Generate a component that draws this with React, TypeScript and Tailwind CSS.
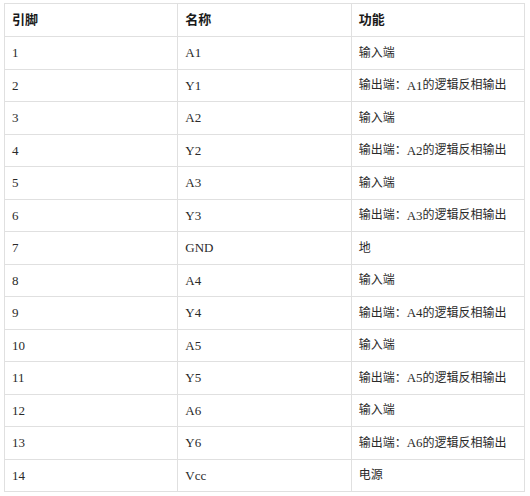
import React from "react";

const rows: [string, string, string][] = [
  ["1", "A1", "输入端"],
  ["2", "Y1", "输出端：A1的逻辑反相输出"],
  ["3", "A2", "输入端"],
  ["4", "Y2", "输出端：A2的逻辑反相输出"],
  ["5", "A3", "输入端"],
  ["6", "Y3", "输出端：A3的逻辑反相输出"],
  ["7", "GND", "地"],
  ["8", "A4", "输入端"],
  ["9", "Y4", "输出端：A4的逻辑反相输出"],
  ["10", "A5", "输入端"],
  ["11", "Y5", "输出端：A5的逻辑反相输出"],
  ["12", "A6", "输入端"],
  ["13", "Y6", "输出端：A6的逻辑反相输出"],
  ["14", "Vcc", "电源"],
];

const font = { fontFamily: '"Liberation Serif", "Noto Sans CJK SC", serif' };

// CJK runs are set a touch smaller than the latin ones, like the original page
const Mixed = ({ text }: { text: string }) => (
  <>
    {text.split(/([\u3000-\uffff]+)/).map((part, i) =>
      /[\u3000-\uffff]/.test(part) ? (
        <span key={i} className="text-[12px]">
          {part}
        </span>
      ) : (
        <span key={i}>{part}</span>
      )
    )}
  </>
);

const App = () => {
  return (
    <div className="w-[530px] h-[496px] bg-white pt-[3px] pl-[4px]" style={font}>
      <div className="w-[521px] border-l border-t border-[#e0e0e0] text-[#2a2a2a]">
        <div className="grid grid-cols-3 h-[33px] border-b border-[#e0e0e0]">
          {["引脚", "名称", "功能"].map((h) => (
            <div
              key={h}
              className="flex items-center pl-[7px] border-r border-[#e0e0e0] text-[13px] font-bold text-[#1a1a1a]"
            >
              {h}
            </div>
          ))}
        </div>
        {rows.map((r) => (
          <div key={r[0]} className="grid grid-cols-3 h-[32.5px] border-b border-[#e0e0e0]">
            {r.map((c, i) => (
              <div
                key={i}
                className="flex items-center pl-[7px] border-r border-[#e0e0e0] text-[13px]"
              >
                <Mixed text={c} />
              </div>
            ))}
          </div>
        ))}
      </div>
    </div>
  );
};

export default App;
